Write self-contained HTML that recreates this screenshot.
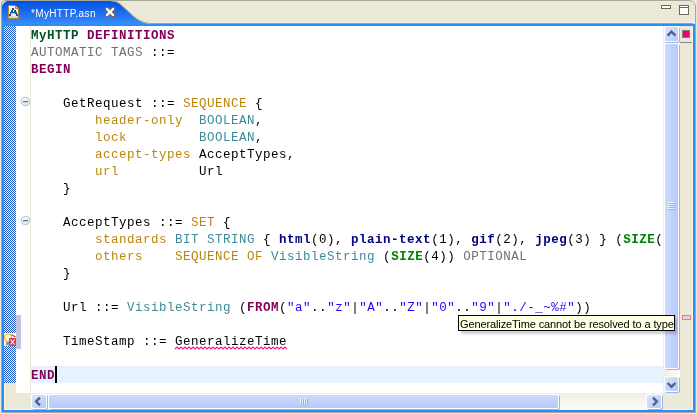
<!DOCTYPE html>
<html><head><meta charset="utf-8">
<style>
html,body{margin:0;padding:0;}
body{width:697px;height:414px;position:relative;overflow:hidden;background:#ECE9D8;font-family:"Liberation Sans",sans-serif;}
.abs{position:absolute;}
#outer{left:1px;top:0;width:695px;height:413px;box-sizing:border-box;border:1px solid #ACA899;border-bottom:1px solid #ACA899;border-radius:4px 7px 0 0;background:#ECE9D8;}
#frame{left:2px;top:24px;width:693px;height:388px;box-sizing:border-box;border:2px solid #2B8CFC;background:#ECE9D8;}
#inner{left:4px;top:26px;width:689px;height:384px;box-sizing:border-box;border-left:1px solid #FFF6DC;border-bottom:1px solid #FFF6DC;border-right:1px solid #FFF6DC;}
#checker{left:4px;top:26px;width:12px;height:357px;
 background-color:#1E58C8;
 background-image:linear-gradient(45deg,#FCF7E2 25%,transparent 25%,transparent 75%,#FCF7E2 75%),linear-gradient(45deg,#FCF7E2 25%,transparent 25%,transparent 75%,#FCF7E2 75%);
 background-size:2px 2px;background-position:0 0,1px 1px;}
#gutter{left:16px;top:26px;width:14px;height:367px;background:#fff;}
#gline{left:30px;top:26px;width:1px;height:367px;background:#EDE9D9;}
#text{left:31px;top:26px;width:632px;height:367px;background:#fff;overflow:hidden;}
#curline{left:0;top:340px;width:632px;height:17px;background:#E8F2FE;}
pre{will-change:transform;margin:0;position:absolute;left:0;top:2px;font-family:"Liberation Mono",monospace;font-size:12.5px;letter-spacing:0.5px;line-height:17px;color:#000;white-space:pre;}
.g{color:#005028;font-weight:bold}
.k{color:#7F0055;font-weight:bold}
.gr{color:#707070}
.o{color:#BA870C}
.t{color:#3C8C98}
.n{color:#000080;font-weight:bold}
.s{color:#2A00FF}
.z{color:#008000;font-weight:bold}
#tab{left:2px;top:1px;}
#title{will-change:transform;left:31px;top:7px;font-size:10px;letter-spacing:0.35px;color:#fff;white-space:pre;line-height:13px;}
</style></head><body>
<div id="outer" class="abs"></div>
<svg class="abs" style="left:0;top:0" width="697" height="26">
 <defs><linearGradient id="tg" x1="0" y1="0" x2="0" y2="1"><stop offset="0" stop-color="#0050E2"/><stop offset="0.5" stop-color="#1D6FF0"/><stop offset="1" stop-color="#3E92FC"/></linearGradient></defs>
 <path d="M2 26 L2 6 L3 4 L4 3 L5 2 L7 1 L111 1 L116 2 L119 3.5 L122 6 L129 12.5 L134 17 L137 19.5 L140.5 21.3 L144.5 23 L150 24 L695 24 L695 26 Z" fill="url(#tg)"/>
 <path d="M111 0.5 L116 1.5 L119 3 L122 5.5 L129 12 L134 16.5 L137 19 L140.5 20.8 L144.5 22.5 L150 23.5 L693 23.5" fill="none" stroke="#A8A088" stroke-width="1"/>
<rect x="150" y="22" width="543" height="1" fill="#F6F3E6"/>
</svg>
<div id="frame" class="abs"></div>
<div id="inner" class="abs"></div>
<div id="checker" class="abs"></div>
<div id="gutter" class="abs"></div>
<div id="gline" class="abs"></div>
<div id="text" class="abs">
<div id="curline" class="abs"></div>
<pre><span class="g">MyHTTP</span> <span class="k">DEFINITIONS</span>
<span class="gr">AUTOMATIC TAGS</span> ::=
<span class="k">BEGIN</span>

    GetRequest ::= <span class="o">SEQUENCE</span> {
        <span class="o">header-only</span>  <span class="t">BOOLEAN</span>,
        <span class="o">lock</span>         <span class="t">BOOLEAN</span>,
        <span class="o">accept-types</span> AcceptTypes,
        <span class="o">url</span>          Url
    }

    AcceptTypes ::= <span class="o">SET</span> {
        <span class="o">standards</span> <span class="t">BIT STRING</span> { <span class="n">html</span>(0), <span class="n">plain-text</span>(1), <span class="n">gif</span>(2), <span class="n">jpeg</span>(3) } (<span class="z">SIZE</span>(
        <span class="o">others</span>    <span class="o">SEQUENCE OF</span> <span class="t">VisibleString</span> (<span class="z">SIZE</span>(4)) <span class="gr">OPTIONAL</span>
    }

    Url ::= <span class="t">VisibleString</span> (<span class="k">FROM</span>(<span class="s">"a"</span>..<span class="s">"z"</span>|<span class="s">"A"</span>..<span class="s">"Z"</span>|<span class="s">"0"</span>..<span class="s">"9"</span>|<span class="s">"./-_~%#"</span>))

    TimeStamp ::= GeneralizeTime

<span class="k">END</span></pre>
</div>
<!--SB-->
<svg class="abs" style="left:0;top:0" width="697" height="414">
<defs><linearGradient id="bg" x1="0" y1="0" x2="1" y2="1"><stop offset="0" stop-color="#DCE6FD"/><stop offset="1" stop-color="#B4C8F7"/></linearGradient><linearGradient id="thv" x1="0" y1="0" x2="1" y2="0"><stop offset="0" stop-color="#CCDAFD"/><stop offset="1" stop-color="#B6CAF8"/></linearGradient><linearGradient id="thh" x1="0" y1="0" x2="0" y2="1"><stop offset="0" stop-color="#CCDAFD"/><stop offset="1" stop-color="#B6CAF8"/></linearGradient><linearGradient id="trv" x1="0" y1="0" x2="1" y2="0"><stop offset="0" stop-color="#F0EEE2"/><stop offset="1" stop-color="#FDFDFA"/></linearGradient><linearGradient id="trh" x1="0" y1="0" x2="0" y2="1"><stop offset="0" stop-color="#F0EEE2"/><stop offset="1" stop-color="#FDFDFA"/></linearGradient></defs>
<rect x="663" y="26" width="17" height="367" fill="url(#trv)"/>
<rect x="665" y="27" width="15" height="16" rx="2" fill="#9DB3E4"/><rect x="664" y="26" width="15" height="16" rx="2" fill="#FFFFFF"/><rect x="665" y="27" width="13" height="14" rx="1.5" fill="url(#bg)"/>
<rect x="665" y="44" width="15" height="326" rx="2" fill="#9DB3E4"/><rect x="664" y="43" width="15" height="326" rx="2" fill="#FFFFFF"/><rect x="665" y="44" width="13" height="324" rx="1.5" fill="url(#thv)"/>
<rect x="665" y="377" width="15" height="16" rx="2" fill="#9DB3E4"/><rect x="664" y="376" width="15" height="16" rx="2" fill="#FFFFFF"/><rect x="665" y="377" width="13" height="14" rx="1.5" fill="url(#bg)"/>
<path d="M667.6 35.6 L671.5 31.7 L675.4 35.6" fill="none" stroke="#4D6185" stroke-width="2.4"/>
<path d="M667.6 383 L671.5 386.9 L675.4 383" fill="none" stroke="#4D6185" stroke-width="2.4"/>
<rect x="668" y="202" width="6" height="1" fill="#EEF4FE"/><rect x="669" y="203" width="6" height="1" fill="#8CB0F8"/>
<rect x="668" y="204" width="6" height="1" fill="#EEF4FE"/><rect x="669" y="205" width="6" height="1" fill="#8CB0F8"/>
<rect x="668" y="206" width="6" height="1" fill="#EEF4FE"/><rect x="669" y="207" width="6" height="1" fill="#8CB0F8"/>
<rect x="668" y="208" width="6" height="1" fill="#EEF4FE"/><rect x="669" y="209" width="6" height="1" fill="#8CB0F8"/>
<rect x="31" y="393" width="632" height="17" fill="url(#trh)"/>
<rect x="32" y="395" width="16" height="15" rx="2" fill="#9DB3E4"/><rect x="31" y="394" width="16" height="15" rx="2" fill="#FFFFFF"/><rect x="32" y="395" width="14" height="13" rx="1.5" fill="url(#bg)"/>
<rect x="49" y="395" width="511" height="15" rx="2" fill="#9DB3E4"/><rect x="48" y="394" width="511" height="15" rx="2" fill="#FFFFFF"/><rect x="49" y="395" width="509" height="13" rx="1.5" fill="url(#thh)"/>
<rect x="647" y="395" width="16" height="15" rx="2" fill="#9DB3E4"/><rect x="646" y="394" width="16" height="15" rx="2" fill="#FFFFFF"/><rect x="647" y="395" width="14" height="13" rx="1.5" fill="url(#bg)"/>
<path d="M40 397.6 L36.1 401.5 L40 405.4" fill="none" stroke="#4D6185" stroke-width="2.4"/>
<path d="M653 397.6 L656.9 401.5 L653 405.4" fill="none" stroke="#4D6185" stroke-width="2.4"/>
<rect x="300" y="398" width="1" height="6" fill="#EEF4FE"/><rect x="301" y="399" width="1" height="6" fill="#8CB0F8"/>
<rect x="302" y="398" width="1" height="6" fill="#EEF4FE"/><rect x="303" y="399" width="1" height="6" fill="#8CB0F8"/>
<rect x="304" y="398" width="1" height="6" fill="#EEF4FE"/><rect x="305" y="399" width="1" height="6" fill="#8CB0F8"/>
<rect x="306" y="398" width="1" height="6" fill="#EEF4FE"/><rect x="307" y="399" width="1" height="6" fill="#8CB0F8"/>
</svg>
<!--/SB-->
<div id="title" class="abs">*MyHTTP.asn</div>

<!-- tab icon -->
<svg class="abs" style="left:0;top:0" width="130" height="24">
 <defs><linearGradient id="ig" x1="0" y1="0" x2="0" y2="1"><stop offset="0" stop-color="#FFFFFF"/><stop offset="1" stop-color="#DCE6F4"/></linearGradient></defs>
 <path d="M8.5 5.5 H15.5 L18.5 8.5 V18.5 H8.5 Z" fill="url(#ig)" stroke="#B8862E" stroke-width="1"/>
 <path d="M15.5 5.5 V8.5 H18.5 Z" fill="#E8C070" stroke="#B8862E" stroke-width="1" stroke-linejoin="round"/>
 <g fill="#1F5596">
  <rect x="12" y="8" width="2" height="2"/>
  <rect x="11" y="10" width="2" height="2"/><rect x="14" y="10" width="2" height="2"/>
  <rect x="10" y="12" width="7" height="1"/>
  <rect x="10" y="13" width="1" height="1"/><rect x="15" y="13" width="2" height="1"/>
  <rect x="9" y="14" width="2" height="2"/><rect x="16" y="14" width="2" height="2"/>
 </g>
 <rect x="11" y="13" width="4" height="1" fill="#A8C4E8"/>
 <rect x="9" y="16" width="9" height="2" fill="#C8D8EE"/>
</svg>
<!-- close X -->
<svg class="abs" style="left:0;top:0" width="130" height="24">
 <polygon points="105,7 108,7 110,9 112,7 115,7 115,10 113,12 115,14 115,17 112,17 110,15 108,17 105,17 105,14 107,12 105,10" fill="#7A6E58"/>
 <polygon points="106,8 107.6,8 110,10.4 112.4,8 114,8 114,9.6 111.6,12 114,14.4 114,16 112.4,16 110,13.6 107.6,16 106,16 106,14.4 108.4,12 106,9.6" fill="#FFFFFF"/>
</svg>
<!-- min / max -->
<div class="abs" style="left:661px;top:5px;width:10px;height:4px;box-sizing:border-box;border:1px solid #6B6A5A;background:#fff"></div>
<div class="abs" style="left:679px;top:5px;width:10px;height:10px;box-sizing:border-box;border:1px solid #6B6A5A;background:#fff"></div><div class="abs" style="left:680px;top:7px;width:8px;height:1px;background:#6B6A5A"></div>
<!--MISC-->
<svg class="abs" style="left:0;top:0" width="697" height="414">
 <defs>
  <radialGradient id="fold" cx="0.4" cy="0.35" r="0.7"><stop offset="0" stop-color="#F4FAFE"/><stop offset="1" stop-color="#D4E6F4"/></radialGradient>
 </defs>
 <!-- fold markers -->
 <circle cx="25.5" cy="101.5" r="4.3" fill="url(#fold)" stroke="#B4C0CC" stroke-width="1"/>
 <rect x="23" y="101" width="5" height="1.3" fill="#6C7488"/>
 <circle cx="25.5" cy="220.5" r="4.3" fill="url(#fold)" stroke="#B4C0CC" stroke-width="1"/>
 <rect x="23" y="220" width="5" height="1.3" fill="#6C7488"/>
 <!-- lavender bar -->
 <rect x="16" y="315" width="5" height="34" fill="#C2C2E2"/>
 <!-- quick fix icon -->
 <rect x="4" y="333" width="12" height="13" fill="#FFFFFF"/>
 <path d="M6.5 345 L6.5 341.5 Q4.5 340 4.5 337.5 Q4.5 334 8 334 Q11.5 334 11.5 337.5 Q11.5 340 9.5 341.5 L9.5 345 Z" fill="#FFF6D0" stroke="#F2B428" stroke-width="1.1"/>
 <rect x="6.5" y="341.5" width="3" height="3.5" fill="#7C90B4"/>
 <path d="M11.5 334.5 L15.5 337" stroke="#E03848" stroke-width="1.4"/>
 <rect x="9" y="338" width="7" height="8" fill="#D8384A"/>
 <path d="M10.5 339.5 L14.5 344.5 M14.5 339.5 L10.5 344.5" stroke="#FFFFFF" stroke-width="1.2"/>
 <!-- overview ruler -->
 <rect x="682.5" y="30.5" width="7" height="7" fill="#F0006E" stroke="#808080" stroke-width="1"/>
 <rect x="680" y="42" width="12" height="1" fill="#8A8A8A"/>
 <rect x="682.5" y="315.5" width="8" height="4" fill="#E8D4D4" stroke="#F070A8" stroke-width="1"/>
 <!-- squiggle -->
 <path d="M175 349 l2 -2 l2 2 l2 -2 l2 2 l2 -2 l2 2 l2 -2 l2 2 l2 -2 l2 2 l2 -2 l2 2 l2 -2 l2 2 l2 -2 l2 2 l2 -2 l2 2 l2 -2 l2 2 l2 -2 l2 2 l2 -2 l2 2 l2 -2 l2 2 l2 -2 l2 2 l2 -2 l2 2 l2 -2 l2 2 l2 -2 l2 2 l2 -2 l2 2 l2 -2 l2 2 l2 -2 l2 2 l2 -2 l2 2 l2 -2 l2 2 l2 -2 l2 2 l2 -2 l2 2 l2 -2 l2 2 l2 -2 l2 2 l2 -2 l2 2 l2 -2 l2 2" fill="none" stroke="#F0208C" stroke-width="1.1"/>
 <!-- caret -->
 <rect x="55" y="366" width="2" height="17" fill="#000"/>
</svg>
<!-- tooltip -->
<div class="abs" style="left:461px;top:318px;width:216px;height:16px;background:rgba(0,0,0,0.18);filter:blur(1px)"></div>
<div class="abs" style="left:458px;top:315px;width:217px;height:16px;box-sizing:border-box;border:1px solid #000;will-change:transform;background:#FFFFE1;font-size:11px;letter-spacing:-0.11px;line-height:14px;padding-left:1px;padding-top:1px;white-space:pre;overflow:hidden;color:#000">GeneralizeTime cannot be resolved to a type</div>
<!--/MISC-->
</body></html>
